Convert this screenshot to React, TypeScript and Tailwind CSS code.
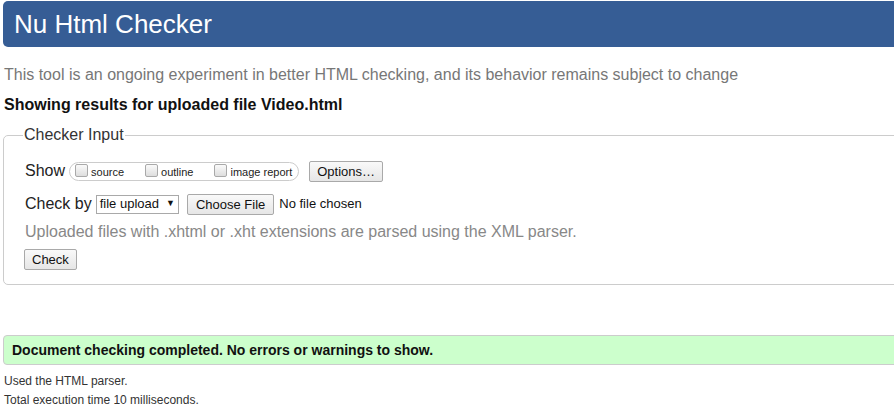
import React from "react";

function Cb({ label }: { label: string }) {
  return (
    <label className="flex items-center">
      <span className="inline-block w-[13px] h-[13px] rounded-[2px] border border-[#a9a9a9] bg-gradient-to-b from-[#fafafa] to-[#dedede] mr-[3px] mb-[3px]" />
      <span className="text-[11px] text-[#222]">{label}</span>
    </label>
  );
}

export default function App() {
  return (
    <div className="w-[894px] h-[411px] overflow-hidden bg-white" style={{ fontFamily: '"Liberation Sans", Arial, sans-serif' }}>
      <div className="w-[960px] pl-[3px] pt-[1px]">
        <div className="h-[46px] rounded-[5px] bg-[#365d95] text-white text-[26px] leading-[46px] pl-[11px]">
          Nu Html Checker
        </div>
        <p className="mt-[18px] ml-[1px] text-[16px] leading-[20px] text-[#777]">
          This tool is an ongoing experiment in better HTML checking, and its behavior remains subject to change
        </p>
        <p className="mt-[10px] ml-[1px] text-[16px] leading-[20px] font-bold text-[#111]">
          Showing results for uploaded file Video.html
        </p>
        <fieldset className="mt-[8px] border border-[#ccc] rounded-[5px] pl-[21px] pb-[13px] pt-[6px]">
          <legend className="ml-[-2px] px-[1px] text-[16px] text-[#333]">Checker Input</legend>
          <div className="flex items-center h-[22px] mt-[7px]">
            <span className="text-[16px] text-[#222] mr-[4px]">Show</span>
            <div className="flex items-center gap-[21px] h-[19px] border border-[#ccc] rounded-full pl-[5px] pr-[6px] pt-[2px]">
              <Cb label="source" />
              <Cb label="outline" />
              <Cb label="image report" />
            </div>
            <button className="ml-[10px] h-[21px] px-[7px] border border-[#a9a9a9] rounded-[2px] bg-gradient-to-b from-[#f9f9f9] to-[#e6e6e6] text-[13px] text-[#111]">
              Options…
            </button>
          </div>
          <div className="flex items-center h-[22px] mt-[11px]">
            <span className="text-[16px] text-[#222] mr-[4px]">Check by</span>
            <div className="flex items-center h-[19px] border border-[#a9a9a9] bg-white px-[3px] text-[13px] text-[#111]">
              file upload
              <span className="ml-[7px] text-[9px]">▼</span>
            </div>
            <button className="ml-[8px] h-[21px] px-[8px] border border-[#a9a9a9] rounded-[2px] bg-gradient-to-b from-[#f9f9f9] to-[#e6e6e6] text-[13px] text-[#111]">
              Choose File
            </button>
            <span className="ml-[5px] text-[13px] text-[#111]">No file chosen</span>
          </div>
          <p className="mt-[7px] text-[16px] leading-[20px] text-[#888]">
            Uploaded files with .xhtml or .xht extensions are parsed using the XML parser.
          </p>
          <button className="mt-[7px] ml-[-1px] h-[21px] px-[7px] border border-[#a9a9a9] rounded-[2px] bg-gradient-to-b from-[#f9f9f9] to-[#e6e6e6] text-[13px] text-[#111]">
            Check
          </button>
        </fieldset>
        <div className="mt-[50px] h-[30px] border border-[#ccc] rounded-[4px] bg-[#ccffcc] pl-[8px] text-[14px] leading-[28px] font-bold text-[#111]">
          Document checking completed. No errors or warnings to show.
        </div>
        <p className="mt-[7px] ml-[1px] text-[12px] leading-[19px] text-[#333]">Used the HTML parser.</p>
        <p className="ml-[1px] text-[12px] leading-[19px] text-[#333]">Total execution time 10 milliseconds.</p>
      </div>
    </div>
  );
}
